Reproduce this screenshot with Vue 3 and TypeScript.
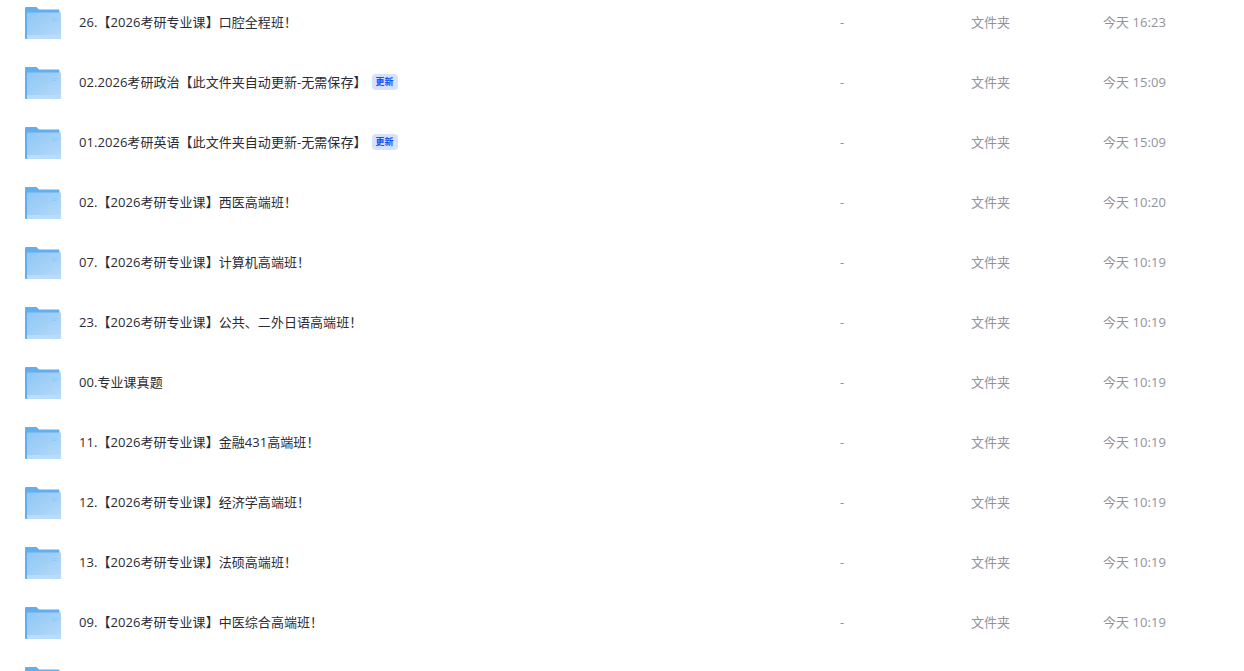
<template>
  <div class="page">
    <div class="list">
      <div v-for="(row, i) in rows" :key="i" class="row">
        <div class="name-col">
          <svg class="folder" viewBox="0 0 36 33" width="36" height="33">
            <defs>
              <linearGradient id="folderFront" x1="0" y1="0" x2="1" y2="1">
                <stop offset="0" stop-color="#8fc7f4" />
                <stop offset="1" stop-color="#b6dafa" />
              </linearGradient>
            </defs>
            <path d="M1 0H11.5L14 2.5H33.5a1 1 0 0 1 1 1V8H2V32H1a1 1 0 0 1-1-1V1a1 1 0 0 1 1-1Z" fill="#62aeee" />
            <path d="M3 5.5H35a1 1 0 0 1 1 1V31a1 1 0 0 1-1 1H2V6.5a1 1 0 0 1 1-1Z" fill="url(#folderFront)" />
            <rect x="2" y="28" width="34" height="4" fill="#b9dcfb" />
            <rect x="27" y="11" width="5" height="1" fill="#8fc8f6" />
            <rect x="27" y="13" width="5" height="1" fill="#8fc8f6" />
          </svg>
          <span v-if="row.name" class="name">{{ row.name }}</span>
          <span v-if="row.updated" class="tag">更新</span>
        </div>
        <template v-if="row.name">
          <div class="size">-</div>
          <div class="type">文件夹</div>
          <div class="time">{{ row.time }}</div>
        </template>
      </div>
    </div>
  </div>
</template>

<script setup lang="ts">
interface Row {
  name: string;
  time: string;
  updated?: boolean;
}

// the last row is scrolled almost out of view, only its folder top shows
const rows: Row[] = [
  { name: "26.【2026考研专业课】口腔全程班！", time: "今天 16:23" },
  { name: "02.2026考研政治【此文件夹自动更新-无需保存】", time: "今天 15:09", updated: true },
  { name: "01.2026考研英语【此文件夹自动更新-无需保存】", time: "今天 15:09", updated: true },
  { name: "02.【2026考研专业课】西医高端班！", time: "今天 10:20" },
  { name: "07.【2026考研专业课】计算机高端班！", time: "今天 10:19" },
  { name: "23.【2026考研专业课】公共、二外日语高端班！", time: "今天 10:19" },
  { name: "00.专业课真题", time: "今天 10:19" },
  { name: "11.【2026考研专业课】金融431高端班！", time: "今天 10:19" },
  { name: "12.【2026考研专业课】经济学高端班！", time: "今天 10:19" },
  { name: "13.【2026考研专业课】法硕高端班！", time: "今天 10:19" },
  { name: "09.【2026考研专业课】中医综合高端班！", time: "今天 10:19" },
  { name: "", time: "" },
];
</script>

<style>
html,
body {
  margin: 0;
  overflow: hidden;
  background: #fff;
}
</style>

<style scoped>
.page {
  height: 671px;
  overflow: hidden;
  font-family: "Open Sans", "Noto Sans CJK SC", sans-serif;
  font-size: 13px;
  line-height: 18px;
  letter-spacing: 0.05px;
}

.list {
  margin-top: -8px;
}

.row {
  display: grid;
  grid-template-columns: 840px 131px 132px 1fr;
  align-items: center;
  height: 60px;
}

.name-col {
  display: flex;
  align-items: center;
  padding-left: 25px;
}

.folder {
  flex: none;
  margin-top: 3px;
}

.name {
  margin-left: 18px;
  color: #2a2b36;
  white-space: nowrap;
}

.tag {
  margin-left: 5px;
  width: 26px;
  height: 16px;
  line-height: 16px;
  border-radius: 4px;
  background: #d6e0ff;
  color: #0d53ff;
  font-size: 9px;
  font-weight: 700;
  text-align: center;
}

.size,
.type,
.time {
  color: #92929c;
}
</style>
